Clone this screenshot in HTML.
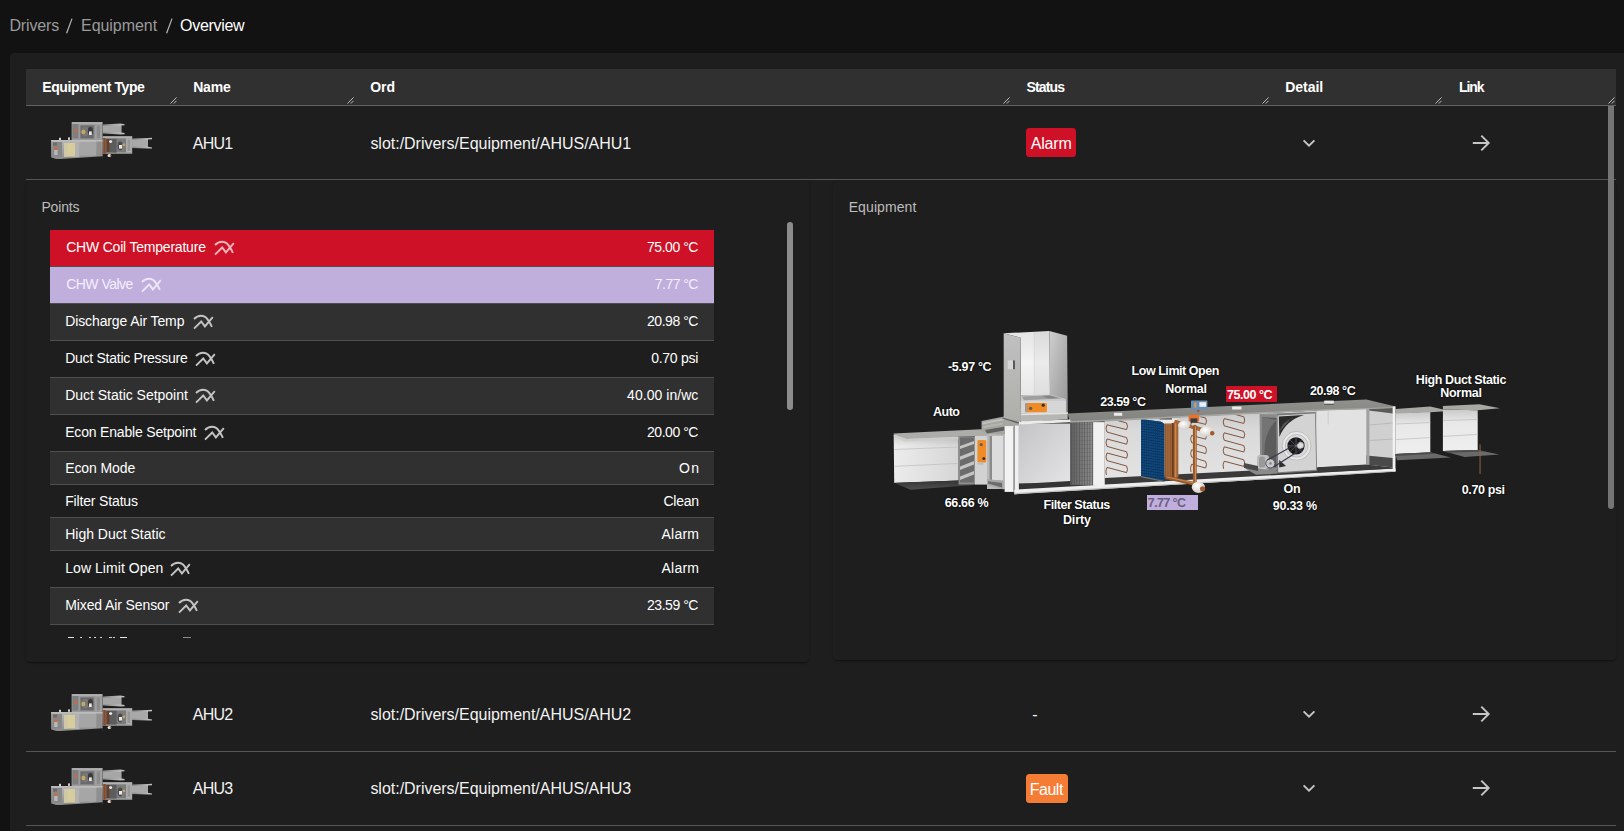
<!DOCTYPE html>
<html><head><meta charset="utf-8"><title>Equipment Overview</title>
<style>
html,body{margin:0;padding:0;background:#121212;overflow:hidden;}
body{width:1624px;height:831px;position:relative;font-family:"Liberation Sans", sans-serif;}
.b{position:absolute;display:block;}
.t{position:absolute;white-space:nowrap;font-family:"Liberation Sans", sans-serif;}
#clip{position:absolute;left:50px;top:625px;width:664px;height:13px;overflow:hidden;}
</style></head><body>
<div class="b" style="left:10px;top:53px;width:1700px;height:900px;background:#1e1e1e;border-radius:4px;"></div>
<div class="b" style="left:26px;top:69px;width:1590px;height:36px;background:#303030;"></div>
<div class="b" style="left:26px;top:105px;width:1590px;height:1px;background:#626262;"></div>
<div class="b" style="left:26px;top:179px;width:1590px;height:1px;background:#555555;"></div>
<div class="b" style="left:26px;top:751px;width:1590px;height:1px;background:#555555;"></div>
<div class="b" style="left:26px;top:825px;width:1590px;height:1px;background:#555555;"></div>
<div class="b" style="left:26px;top:181px;width:782.5px;height:480.5px;background:#1e1e1e;border-radius:4px;box-shadow:0 2px 1px -1px rgba(0,0,0,.2),0 1px 1px 0 rgba(0,0,0,.14),0 1px 3px 0 rgba(0,0,0,.12);"></div>
<div class="b" style="left:832.5px;top:181px;width:783px;height:479px;background:#1e1e1e;border-radius:4px;box-shadow:0 2px 1px -1px rgba(0,0,0,.2),0 1px 1px 0 rgba(0,0,0,.14),0 1px 3px 0 rgba(0,0,0,.12);"></div>
<div class="b" style="left:1608px;top:106px;width:6px;height:402.5px;background:#757575;border-radius:0 0 3px 3px;"></div>
<div class="b" style="left:787px;top:222px;width:6px;height:188px;background:#8c8c8c;border-radius:3px;"></div>
<div class="b" style="left:1026px;top:128px;width:50px;height:29px;background:#ce1126;border-radius:3.5px;"></div>
<div class="b" style="left:1026px;top:774px;width:42px;height:29.3px;background:#f57c34;border-radius:3.5px;"></div>
<div class="b" style="left:50px;top:230px;width:664px;height:37px;background:#ce1126;box-sizing:border-box;border-bottom:1px solid #4e4e4e;"></div>
<div class="b" style="left:50px;top:267px;width:664px;height:37px;background:#c0aedd;box-sizing:border-box;border-bottom:1px solid #4e4e4e;"></div>
<div class="b" style="left:50px;top:304px;width:664px;height:37px;background:#303030;box-sizing:border-box;border-bottom:1px solid #4e4e4e;"></div>
<div class="b" style="left:50px;top:341px;width:664px;height:37px;background:#1e1e1e;box-sizing:border-box;border-bottom:1px solid #4e4e4e;"></div>
<div class="b" style="left:50px;top:378px;width:664px;height:37px;background:#303030;box-sizing:border-box;border-bottom:1px solid #4e4e4e;"></div>
<div class="b" style="left:50px;top:415px;width:664px;height:37px;background:#1e1e1e;box-sizing:border-box;border-bottom:1px solid #4e4e4e;"></div>
<div class="b" style="left:50px;top:452px;width:664px;height:33px;background:#303030;box-sizing:border-box;border-bottom:1px solid #4e4e4e;"></div>
<div class="b" style="left:50px;top:485px;width:664px;height:33px;background:#1e1e1e;box-sizing:border-box;border-bottom:1px solid #4e4e4e;"></div>
<div class="b" style="left:50px;top:518px;width:664px;height:33px;background:#303030;box-sizing:border-box;border-bottom:1px solid #4e4e4e;"></div>
<div class="b" style="left:50px;top:551px;width:664px;height:37px;background:#1e1e1e;box-sizing:border-box;border-bottom:1px solid #4e4e4e;"></div>
<div class="b" style="left:50px;top:588px;width:664px;height:37px;background:#303030;box-sizing:border-box;border-bottom:1px solid #4e4e4e;"></div>
<div class="b" style="left:1147px;top:494.5px;width:50.5px;height:15px;background:#c0aedd;"></div>
<div class="b" style="left:1226.3px;top:386.2px;width:50.7px;height:15.4px;background:#ce1126;"></div>
<div id="clip"><div class="b" style="left:18.3px;top:12px;width:5.9px;height:1px;background:#e8e8e8"></div><div class="b" style="left:29.8px;top:12px;width:2.4px;height:1px;background:#d0d0d0"></div><div class="b" style="left:38.8px;top:12px;width:2.2px;height:1px;background:#d8d8d8"></div><div class="b" style="left:44.3px;top:12px;width:2.1px;height:1px;background:#d8d8d8"></div><div class="b" style="left:50.2px;top:12px;width:2.2px;height:1px;background:#d0d0d0"></div><div class="b" style="left:59.4px;top:12px;width:2.2px;height:1px;background:#d0d0d0"></div><div class="b" style="left:62.6px;top:12px;width:2.2px;height:1px;background:#d0d0d0"></div><div class="b" style="left:69.7px;top:12px;width:7.6px;height:1px;background:#e8e8e8"></div><div class="b" style="left:132.5px;top:12px;width:8.0px;height:1px;background:#8a8a8a"></div></div>
<div class="b" style="left:40px;top:110px;width:130px;height:65px"><svg width="130" height="65" viewBox="40 110 130 65" style="display:block;filter:blur(0.35px)">
<defs>
<linearGradient id="tg1" x1="0" y1="0" x2="0" y2="1"><stop offset="0" stop-color="#b8b8b8"/><stop offset="1" stop-color="#8e8e8e"/></linearGradient>
<linearGradient id="tg2" x1="0" y1="0" x2="1" y2="0"><stop offset="0" stop-color="#8a8a8a"/><stop offset="1" stop-color="#c4c4c4"/></linearGradient>
</defs>
<!-- upper right duct -->
<polygon points="102.8,124.6 120.5,123.4 124.6,124.2 124.6,125.2 121.4,125.6 121.4,132.4 124.6,133 124.6,134.2 120.5,134.4 102.8,133.6" fill="url(#tg2)"/>
<rect x="102.8" y="126" width="18.4" height="6.2" fill="#a6a6a6"/>
<!-- lower right duct -->
<polygon points="132,138.6 147.5,138 152,137.8 152,139.2 148,139.6 148,146.8 152,147.4 152,148.6 147.5,148.4 132,148" fill="url(#tg2)"/>
<rect x="132" y="140" width="16" height="6.6" fill="#a9a9a9"/>
<!-- upper box -->
<rect x="71.6" y="122" width="31" height="18.4" fill="#9b9b9b"/>
<rect x="72.2" y="122.6" width="30" height="1" fill="#bdbdbd"/>
<rect x="72.4" y="124" width="6" height="14.5" fill="#7f7f7f"/>
<rect x="80" y="125" width="14.6" height="14" fill="#8a8a8a"/>
<rect x="80.6" y="125.6" width="13" height="12.6" fill="#6a6a6a"/>
<ellipse cx="85.2" cy="131.5" rx="3.8" ry="5" fill="#777"/>
<ellipse cx="83.4" cy="132" rx="2" ry="2.2" fill="#c8a860"/>
<ellipse cx="90.4" cy="131" rx="2.6" ry="4" fill="#3a3a3a"/>
<rect x="89" y="131.4" width="2.8" height="3.6" fill="#e6e6e6"/>
<rect x="95.4" y="124.6" width="6.2" height="14.4" fill="#a5a5a5"/>
<rect x="96.6" y="125.4" width="3.6" height="13" fill="#8c8c8c"/>
<circle cx="75.8" cy="130.6" r="1.3" fill="#e8602a"/>
<!-- lower left box -->
<rect x="51.2" y="140" width="51.4" height="18.8" fill="url(#tg1)"/>
<rect x="51.2" y="140" width="51.4" height="1.4" fill="#bcbcbc"/>
<rect x="51.2" y="157" width="51.4" height="1.8" fill="#909090"/>
<rect x="52.4" y="142" width="9.6" height="14.6" fill="#878787"/>
<rect x="53" y="142.6" width="4" height="3" fill="#6c6c6c"/>
<rect x="54.2" y="150" width="3.4" height="5" fill="#b8b8b8"/>
<circle cx="55.6" cy="148.6" r="1.4" fill="#e8602a"/>
<rect x="64" y="143" width="11" height="13.6" fill="#d7cc9c"/>
<rect x="64" y="143" width="3.6" height="13.6" fill="#cfc8a4"/>
<rect x="75" y="142" width="4.4" height="15" fill="#b2b2b2"/>
<rect x="79.4" y="142" width="17" height="13.6" fill="#a6a6a6"/>
<rect x="96.4" y="141.6" width="5.4" height="15" fill="#8f8f8f"/>
<polygon points="57,159.3 102.8,156.3 102.8,159.6" fill="#1e1e1e"/><polygon points="50.8,157.2 57,159.3 50.8,159.3" fill="#1e1e1e"/>
<rect x="59" y="137.8" width="2" height="2.4" fill="#cfcfcf"/><rect x="68" y="137.4" width="2" height="2.4" fill="#cfcfcf"/>
<!-- lower right box -->
<rect x="102.8" y="136.4" width="29.4" height="17.4" fill="#9e9e9e"/>
<rect x="102.8" y="136.4" width="29.4" height="1.2" fill="#c0c0c0"/>
<rect x="103.2" y="138" width="2.6" height="15.6" fill="#8a4a28"/>
<rect x="105.8" y="138.6" width="11" height="14" fill="#5c5c5c"/>
<rect x="107" y="139" width="2.4" height="13" fill="#6a3c24"/>
<ellipse cx="110.6" cy="141.6" rx="1.6" ry="1.4" fill="#ececec"/>
<rect x="117" y="138.6" width="9" height="13.6" fill="#7c7c7c"/>
<ellipse cx="120.2" cy="146" rx="2.6" ry="4.4" fill="#4a4a4a"/>
<rect x="119" y="145" width="3.2" height="3.6" fill="#e8e8e8"/>
<ellipse cx="123.8" cy="144.8" rx="1.4" ry="1.4" fill="#c8a860"/>
<rect x="126.4" y="138.4" width="5.2" height="13.8" fill="#b4b4b4"/>
<rect x="127.4" y="139.4" width="3" height="11.6" fill="#979797"/>
<ellipse cx="109.4" cy="155.4" rx="1.8" ry="1.5" fill="#ececec"/><circle cx="110.4" cy="155.8" r="0.8" fill="#b0602a"/>
</svg>
</div><div class="b" style="left:40px;top:682px;width:130px;height:65px"><svg width="130" height="65" viewBox="40 110 130 65" style="display:block;filter:blur(0.35px)">
<defs>
<linearGradient id="tg1" x1="0" y1="0" x2="0" y2="1"><stop offset="0" stop-color="#b8b8b8"/><stop offset="1" stop-color="#8e8e8e"/></linearGradient>
<linearGradient id="tg2" x1="0" y1="0" x2="1" y2="0"><stop offset="0" stop-color="#8a8a8a"/><stop offset="1" stop-color="#c4c4c4"/></linearGradient>
</defs>
<!-- upper right duct -->
<polygon points="102.8,124.6 120.5,123.4 124.6,124.2 124.6,125.2 121.4,125.6 121.4,132.4 124.6,133 124.6,134.2 120.5,134.4 102.8,133.6" fill="url(#tg2)"/>
<rect x="102.8" y="126" width="18.4" height="6.2" fill="#a6a6a6"/>
<!-- lower right duct -->
<polygon points="132,138.6 147.5,138 152,137.8 152,139.2 148,139.6 148,146.8 152,147.4 152,148.6 147.5,148.4 132,148" fill="url(#tg2)"/>
<rect x="132" y="140" width="16" height="6.6" fill="#a9a9a9"/>
<!-- upper box -->
<rect x="71.6" y="122" width="31" height="18.4" fill="#9b9b9b"/>
<rect x="72.2" y="122.6" width="30" height="1" fill="#bdbdbd"/>
<rect x="72.4" y="124" width="6" height="14.5" fill="#7f7f7f"/>
<rect x="80" y="125" width="14.6" height="14" fill="#8a8a8a"/>
<rect x="80.6" y="125.6" width="13" height="12.6" fill="#6a6a6a"/>
<ellipse cx="85.2" cy="131.5" rx="3.8" ry="5" fill="#777"/>
<ellipse cx="83.4" cy="132" rx="2" ry="2.2" fill="#c8a860"/>
<ellipse cx="90.4" cy="131" rx="2.6" ry="4" fill="#3a3a3a"/>
<rect x="89" y="131.4" width="2.8" height="3.6" fill="#e6e6e6"/>
<rect x="95.4" y="124.6" width="6.2" height="14.4" fill="#a5a5a5"/>
<rect x="96.6" y="125.4" width="3.6" height="13" fill="#8c8c8c"/>
<circle cx="75.8" cy="130.6" r="1.3" fill="#e8602a"/>
<!-- lower left box -->
<rect x="51.2" y="140" width="51.4" height="18.8" fill="url(#tg1)"/>
<rect x="51.2" y="140" width="51.4" height="1.4" fill="#bcbcbc"/>
<rect x="51.2" y="157" width="51.4" height="1.8" fill="#909090"/>
<rect x="52.4" y="142" width="9.6" height="14.6" fill="#878787"/>
<rect x="53" y="142.6" width="4" height="3" fill="#6c6c6c"/>
<rect x="54.2" y="150" width="3.4" height="5" fill="#b8b8b8"/>
<circle cx="55.6" cy="148.6" r="1.4" fill="#e8602a"/>
<rect x="64" y="143" width="11" height="13.6" fill="#d7cc9c"/>
<rect x="64" y="143" width="3.6" height="13.6" fill="#cfc8a4"/>
<rect x="75" y="142" width="4.4" height="15" fill="#b2b2b2"/>
<rect x="79.4" y="142" width="17" height="13.6" fill="#a6a6a6"/>
<rect x="96.4" y="141.6" width="5.4" height="15" fill="#8f8f8f"/>
<polygon points="57,159.3 102.8,156.3 102.8,159.6" fill="#1e1e1e"/><polygon points="50.8,157.2 57,159.3 50.8,159.3" fill="#1e1e1e"/>
<rect x="59" y="137.8" width="2" height="2.4" fill="#cfcfcf"/><rect x="68" y="137.4" width="2" height="2.4" fill="#cfcfcf"/>
<!-- lower right box -->
<rect x="102.8" y="136.4" width="29.4" height="17.4" fill="#9e9e9e"/>
<rect x="102.8" y="136.4" width="29.4" height="1.2" fill="#c0c0c0"/>
<rect x="103.2" y="138" width="2.6" height="15.6" fill="#8a4a28"/>
<rect x="105.8" y="138.6" width="11" height="14" fill="#5c5c5c"/>
<rect x="107" y="139" width="2.4" height="13" fill="#6a3c24"/>
<ellipse cx="110.6" cy="141.6" rx="1.6" ry="1.4" fill="#ececec"/>
<rect x="117" y="138.6" width="9" height="13.6" fill="#7c7c7c"/>
<ellipse cx="120.2" cy="146" rx="2.6" ry="4.4" fill="#4a4a4a"/>
<rect x="119" y="145" width="3.2" height="3.6" fill="#e8e8e8"/>
<ellipse cx="123.8" cy="144.8" rx="1.4" ry="1.4" fill="#c8a860"/>
<rect x="126.4" y="138.4" width="5.2" height="13.8" fill="#b4b4b4"/>
<rect x="127.4" y="139.4" width="3" height="11.6" fill="#979797"/>
<ellipse cx="109.4" cy="155.4" rx="1.8" ry="1.5" fill="#ececec"/><circle cx="110.4" cy="155.8" r="0.8" fill="#b0602a"/>
</svg>
</div><div class="b" style="left:40px;top:756px;width:130px;height:65px"><svg width="130" height="65" viewBox="40 110 130 65" style="display:block;filter:blur(0.35px)">
<defs>
<linearGradient id="tg1" x1="0" y1="0" x2="0" y2="1"><stop offset="0" stop-color="#b8b8b8"/><stop offset="1" stop-color="#8e8e8e"/></linearGradient>
<linearGradient id="tg2" x1="0" y1="0" x2="1" y2="0"><stop offset="0" stop-color="#8a8a8a"/><stop offset="1" stop-color="#c4c4c4"/></linearGradient>
</defs>
<!-- upper right duct -->
<polygon points="102.8,124.6 120.5,123.4 124.6,124.2 124.6,125.2 121.4,125.6 121.4,132.4 124.6,133 124.6,134.2 120.5,134.4 102.8,133.6" fill="url(#tg2)"/>
<rect x="102.8" y="126" width="18.4" height="6.2" fill="#a6a6a6"/>
<!-- lower right duct -->
<polygon points="132,138.6 147.5,138 152,137.8 152,139.2 148,139.6 148,146.8 152,147.4 152,148.6 147.5,148.4 132,148" fill="url(#tg2)"/>
<rect x="132" y="140" width="16" height="6.6" fill="#a9a9a9"/>
<!-- upper box -->
<rect x="71.6" y="122" width="31" height="18.4" fill="#9b9b9b"/>
<rect x="72.2" y="122.6" width="30" height="1" fill="#bdbdbd"/>
<rect x="72.4" y="124" width="6" height="14.5" fill="#7f7f7f"/>
<rect x="80" y="125" width="14.6" height="14" fill="#8a8a8a"/>
<rect x="80.6" y="125.6" width="13" height="12.6" fill="#6a6a6a"/>
<ellipse cx="85.2" cy="131.5" rx="3.8" ry="5" fill="#777"/>
<ellipse cx="83.4" cy="132" rx="2" ry="2.2" fill="#c8a860"/>
<ellipse cx="90.4" cy="131" rx="2.6" ry="4" fill="#3a3a3a"/>
<rect x="89" y="131.4" width="2.8" height="3.6" fill="#e6e6e6"/>
<rect x="95.4" y="124.6" width="6.2" height="14.4" fill="#a5a5a5"/>
<rect x="96.6" y="125.4" width="3.6" height="13" fill="#8c8c8c"/>
<circle cx="75.8" cy="130.6" r="1.3" fill="#e8602a"/>
<!-- lower left box -->
<rect x="51.2" y="140" width="51.4" height="18.8" fill="url(#tg1)"/>
<rect x="51.2" y="140" width="51.4" height="1.4" fill="#bcbcbc"/>
<rect x="51.2" y="157" width="51.4" height="1.8" fill="#909090"/>
<rect x="52.4" y="142" width="9.6" height="14.6" fill="#878787"/>
<rect x="53" y="142.6" width="4" height="3" fill="#6c6c6c"/>
<rect x="54.2" y="150" width="3.4" height="5" fill="#b8b8b8"/>
<circle cx="55.6" cy="148.6" r="1.4" fill="#e8602a"/>
<rect x="64" y="143" width="11" height="13.6" fill="#d7cc9c"/>
<rect x="64" y="143" width="3.6" height="13.6" fill="#cfc8a4"/>
<rect x="75" y="142" width="4.4" height="15" fill="#b2b2b2"/>
<rect x="79.4" y="142" width="17" height="13.6" fill="#a6a6a6"/>
<rect x="96.4" y="141.6" width="5.4" height="15" fill="#8f8f8f"/>
<polygon points="57,159.3 102.8,156.3 102.8,159.6" fill="#1e1e1e"/><polygon points="50.8,157.2 57,159.3 50.8,159.3" fill="#1e1e1e"/>
<rect x="59" y="137.8" width="2" height="2.4" fill="#cfcfcf"/><rect x="68" y="137.4" width="2" height="2.4" fill="#cfcfcf"/>
<!-- lower right box -->
<rect x="102.8" y="136.4" width="29.4" height="17.4" fill="#9e9e9e"/>
<rect x="102.8" y="136.4" width="29.4" height="1.2" fill="#c0c0c0"/>
<rect x="103.2" y="138" width="2.6" height="15.6" fill="#8a4a28"/>
<rect x="105.8" y="138.6" width="11" height="14" fill="#5c5c5c"/>
<rect x="107" y="139" width="2.4" height="13" fill="#6a3c24"/>
<ellipse cx="110.6" cy="141.6" rx="1.6" ry="1.4" fill="#ececec"/>
<rect x="117" y="138.6" width="9" height="13.6" fill="#7c7c7c"/>
<ellipse cx="120.2" cy="146" rx="2.6" ry="4.4" fill="#4a4a4a"/>
<rect x="119" y="145" width="3.2" height="3.6" fill="#e8e8e8"/>
<ellipse cx="123.8" cy="144.8" rx="1.4" ry="1.4" fill="#c8a860"/>
<rect x="126.4" y="138.4" width="5.2" height="13.8" fill="#b4b4b4"/>
<rect x="127.4" y="139.4" width="3" height="11.6" fill="#979797"/>
<ellipse cx="109.4" cy="155.4" rx="1.8" ry="1.5" fill="#ececec"/><circle cx="110.4" cy="155.8" r="0.8" fill="#b0602a"/>
</svg>
</div>
<svg class="b" style="left:880px;top:320px" width="660" height="220" viewBox="880 320 660 220">
<defs>
<linearGradient id="gWall" x1="0" y1="0" x2="1" y2="0"><stop offset="0" stop-color="#ececec"/><stop offset="1" stop-color="#d6d6d6"/></linearGradient>
<linearGradient id="gWallV" x1="0" y1="0" x2="0" y2="1"><stop offset="0" stop-color="#c6c6c6"/><stop offset="0.3" stop-color="#dadada"/><stop offset="1" stop-color="#e4e4e4"/></linearGradient>
<linearGradient id="gTop" x1="0" y1="0" x2="0" y2="1"><stop offset="0" stop-color="#90908c"/><stop offset="1" stop-color="#82827e"/></linearGradient>
<linearGradient id="gFloor" x1="0" y1="0" x2="0" y2="1"><stop offset="0" stop-color="#333333"/><stop offset="1" stop-color="#505050"/></linearGradient>
<linearGradient id="gMix" x1="0" y1="0" x2="1" y2="1"><stop offset="0" stop-color="#c4c4c6"/><stop offset="1" stop-color="#e4e4e6"/></linearGradient>
<linearGradient id="gOAleft" x1="0" y1="0" x2="0" y2="1"><stop offset="0" stop-color="#c0c0c0"/><stop offset="1" stop-color="#aeaeaa"/></linearGradient>
<linearGradient id="gOAright" x1="0" y1="0" x2="1" y2="0"><stop offset="0" stop-color="#cfcfcf"/><stop offset="1" stop-color="#b2b2b2"/></linearGradient><linearGradient id="gShade" x1="0" y1="0" x2="0" y2="1"><stop offset="0" stop-color="#000" stop-opacity="0"/><stop offset="1" stop-color="#000" stop-opacity="0.16"/></linearGradient><linearGradient id="gOAback" x1="0" y1="0" x2="0" y2="1"><stop offset="0" stop-color="#e4e4e4"/><stop offset="0.5" stop-color="#f4f4f4"/><stop offset="1" stop-color="#e6e6e6"/></linearGradient>
<linearGradient id="gFilter" x1="0" y1="0" x2="1" y2="0"><stop offset="0" stop-color="#5e5e5e"/><stop offset="0.5" stop-color="#7a7a7a"/><stop offset="1" stop-color="#8e8e8e"/></linearGradient>
<linearGradient id="gCop" x1="0" y1="0" x2="1" y2="0"><stop offset="0" stop-color="#8c5228"/><stop offset="0.5" stop-color="#d08a50"/><stop offset="1" stop-color="#8c5228"/></linearGradient>
<pattern id="pBlue" width="2.2" height="2.6" patternUnits="userSpaceOnUse" patternTransform="skewY(8)"><rect width="2.2" height="2.6" fill="#0f4a80"/><rect width="2.2" height="0.8" fill="#0a3058"/><rect width="0.6" height="2.6" fill="#0b3864"/></pattern>
<pattern id="pFil" width="2.6" height="4" patternUnits="userSpaceOnUse"><rect width="2.6" height="4" fill="none"/><rect width="0.8" height="4" fill="#4e4e4e" opacity=".7"/><rect y="0" width="2.6" height="0.6" fill="#5a5a5a" opacity=".5"/></pattern>
<radialGradient id="gCyl" cx=".4" cy=".35" r=".7"><stop offset="0" stop-color="#ffffff"/><stop offset="1" stop-color="#cfcac4"/></radialGradient>
<linearGradient id="gDuct" x1="0" y1="0" x2="0" y2="1"><stop offset="0" stop-color="#c9c9c9"/><stop offset="0.3" stop-color="#e8e8e8"/><stop offset="1" stop-color="#efefef"/></linearGradient><linearGradient id="gShadeTop" x1="0" y1="0" x2="0" y2="1"><stop offset="0" stop-color="#000" stop-opacity="0.14"/><stop offset="1" stop-color="#000" stop-opacity="0"/></linearGradient></defs>

<!-- ===== Return duct (left) ===== -->
<polygon points="893.7,435 958.6,436.5 958.6,480.6 894.2,482.9" fill="url(#gWall)"/><polygon points="893.7,435 958.6,436.5 958.6,446 893.7,446" fill="url(#gShadeTop)"/>
<polygon points="893.7,433.6 981.1,429.2 988.3,431.9 988.3,436 958.6,436.8 906.5,439 893.7,434.6" fill="#acaca8"/>
<polygon points="893.7,434.6 906.5,439 958.6,436.8 958.6,439.2 905,441.6 894,436.5" fill="#cdcdcb"/>
<path d="M894.5 449.5 L958.6 447 M894.5 466.3 L958.6 463.4" stroke="#bdbdbd" stroke-width="0.7" fill="none"/>
<polygon points="894.2,482.7 958.6,480.4 974,485 910.6,489.8" fill="url(#gFloor)"/>
<!-- damper -->
<rect x="958.6" y="436.5" width="16.6" height="48" fill="#8e8e8e"/>
<rect x="960" y="437.5" width="14" height="45" fill="#6c6c6c"/>
<polygon points="960,446 974,441 974,444 960,449" fill="#c4c4c4"/>
<polygon points="960,456.5 974,451 974,454.5 960,460" fill="#c4c4c4"/>
<polygon points="960,466.5 974,461 974,464.5 960,470" fill="#c4c4c4"/>
<polygon points="960,476.5 974,471 974,474.5 960,480" fill="#c4c4c4"/>
<rect x="975" y="436" width="12.3" height="48.6" fill="#d2d2d2"/>
<rect x="977.4" y="440" width="8.8" height="22.6" rx="1.3" fill="#f08c28"/>
<circle cx="981.2" cy="444.6" r="1.6" fill="#6b5a4a"/><circle cx="983.8" cy="458.4" r="1.5" fill="#3c2c22"/>
<rect x="977.4" y="462.6" width="6" height="2" fill="#bbbbbb"/>

<!-- ===== Mixing box side ===== -->
<rect x="987" y="434" width="17.8" height="55" fill="#b9b9b9"/>
<rect x="989.6" y="436" width="2.4" height="50" fill="#8a8a8a"/>
<rect x="992" y="436" width="11" height="44" fill="#dcdcdc"/>
<polygon points="987,479 1003.6,481 1003.6,489.5 987,485" fill="#a8a8a8"/>
<polygon points="988,481.3 1002,483 1002,487.5 988,483.5" fill="#6b6b6b"/>
<!-- louver on top of mixing box side -->
<polygon points="981.5,421 1004,416.4 1020,417.6 1020,422 1004.6,426.7 1004.6,434.5 987,434 981.5,431" fill="#a4a4a0"/>
<polygon points="1003.6,417.6 1021.2,423.2 1021.2,427 1004.4,427" fill="#a6a6a2"/><polygon points="982.3,422.5 1004,418.3 1004,420.2 982.3,424.6" fill="#c0c0bc"/>
<polygon points="983,426 1003,422.4 1003,424.4 983,428.2" fill="#b4b4b0"/>
<polygon points="985,430 1004,426.8 1004,430.6 987,433.6" fill="#5e5e5c"/>
<!-- columns -->
<rect x="1004.6" y="426.1" width="9.1" height="65.8" fill="#f3f3f3"/>
<rect x="1013.7" y="426.1" width="1.3" height="66.5" fill="#9a9a9a"/>
<rect x="1015" y="425.6" width="3.9" height="68" fill="#f0f0f0"/>
<!-- back wall of mixing box -->
<rect x="1018.9" y="423.5" width="51.6" height="60" fill="url(#gMix)"/>
<polygon points="1018.9,483.9 1070.3,481 1093.1,485 1093.1,485.9 1019.4,489.8" fill="#343434"/>

<!-- ===== Main casing back wall ===== -->
<polygon points="1104.6,420.6 1394,406.8 1394,468 1104.6,485" fill="url(#gWallV)"/>
<!-- floor main -->
<polygon points="1104.6,477.9 1394,463.5 1394,469 1104.6,485" fill="#3a3a3a"/>
<!-- bottom frame -->
<polygon points="1014.3,489.7 1395.5,468.5 1395.5,471.6 1014.3,494.2" fill="#eeeeee"/>
<polygon points="1014.3,493.2 1395.5,470.8 1395.5,471.8 1014.3,494.4" fill="#bdbdbd"/>
<!-- filter -->
<rect x="1070.3" y="422.1" width="22.9" height="63" fill="url(#gFilter)"/>
<rect x="1070.3" y="422.1" width="22.9" height="63" fill="url(#pFil)"/>
<!-- post -->
<rect x="1093.1" y="422.1" width="11.6" height="63.4" fill="#f1f1f1"/>

<!-- serpentines -->
<g fill="none" stroke="#7c4e34" stroke-width="0.95">
<path d="M1118 420.6 L1126.6 423 Q1128.4 426.2 1126.6 429.6 L1107 424.8 Q1105 428 1107 432 L1126.6 437.6 Q1128.4 441 1126.6 444.2 L1107 439 Q1105 442.4 1107 446.4 L1126.6 451.8 Q1128.4 455 1126.6 458.2 L1107 453 Q1105 456.6 1107 460.6 L1126.6 466 Q1128.4 469.4 1126.6 472.6 L1107 467.4 Q1105 471 1106.4 475"/>
<path transform="translate(117.2,-6.2)" d="M1118 420.6 L1126.6 423 Q1128.4 426.2 1126.6 429.6 L1107 424.8 Q1105 428 1107 432 L1126.6 437.6 Q1128.4 441 1126.6 444.2 L1107 439 Q1105 442.4 1107 446.4 L1126.6 451.8 Q1128.4 455 1126.6 458.2 L1107 453 Q1105 456.6 1107 460.6 L1126.6 466 Q1128.4 469.4 1126.6 472.6 L1107 467.4 Q1105 471 1106.4 475"/>
<path d="M1200 416.6 L1205.6 418 Q1207.4 421 1205.6 424.4 L1192 421 Q1190 424.6 1191.6 428 L1205.6 432.6 Q1207.4 436 1205.6 439.2 L1191.6 435.4 Q1189.8 438.8 1191.6 442.6 L1205.6 447 Q1207.4 450.4 1205.6 453.6 L1191.6 449.8 Q1189.8 453.4 1191.6 457 L1205.6 461.4 Q1207.4 464.8 1205.6 468 L1191.6 464.2 Q1189.8 468 1191 472"/>
</g>

<!-- blue coil -->
<polygon points="1141.1,419 1164.5,422.2 1164.5,480.9 1141.1,475.9" fill="#0f4a80"/>
<polygon points="1141.1,419 1164.5,422.2 1164.5,480.9 1141.1,475.9" fill="url(#pBlue)"/>
<polygon points="1141.1,475.9 1164.5,480.9 1164.5,482 1141.1,477.2" fill="#777"/>
<!-- coil top white -->
<polygon points="1158,418.8 1177.1,418.8 1177.1,424 1164.5,424" fill="#ededed"/>
<polygon points="1158,418.2 1172,418.2 1172,419.6 1160,419.6" fill="#3a3a3a"/>
<!-- copper coil end -->
<rect x="1164.5" y="423.4" width="13.9" height="54" fill="#b07040"/>
<g stroke="#7a4826" stroke-width="0.6"><path d="M1165.5 424.5 V477 M1167.2 424.5 V477 M1168.9 424.5 V477 M1170.6 424.5 V477"/></g>
<rect x="1171.8" y="423" width="2" height="54.6" fill="#6a3c1c"/>
<rect x="1173.8" y="422" width="3.6" height="55.6" fill="url(#gCop)"/>
<!-- ===== fan ===== -->
<polygon points="1259.6,414 1276.7,414.6 1276.7,473.4 1260.2,465.8" fill="#8a8a8a"/>
<polygon points="1262,417 1276.7,418 1276.7,468 1262,462" fill="#5c5c5c"/><path d="M1276.7 420 Q1264 432 1264.5 452 L1262 462 L1262 417 Z" fill="#747474"/>
<polygon points="1259.6,414 1315.8,412.1 1317.1,470.9 1276.7,473.4 1276.7,414.6" fill="#7a7a7a"/>
<polygon points="1277.6,415.6 1315,413.4 1316.2,469.8 1278.2,472.2" fill="#d3d3d3"/>
<path d="M1278.8 416.4 L1304 415 Q1286 420 1279.4 437 Z" fill="#2a2a2a"/>
<polygon points="1279.2,460 1286,466 1279.2,467.6" fill="#2e2e2e"/>
<path d="M1279.2 432 Q1283 420 1294 418.6 L1291 418.6 L1279.2 432 Z" fill="#555"/>
<circle cx="1296.6" cy="445.8" r="14.4" fill="#e8e8e8" stroke="#b4b4b4" stroke-width="0.8"/>
<circle cx="1296.6" cy="445.8" r="11.4" fill="#d9d9d9" stroke="#a8a8a8" stroke-width="0.6"/>
<circle cx="1296" cy="445.8" r="8.6" fill="#1a1a1a"/><path d="M1296 437.2 V454.4 M1287.4 445.8 H1304.6 M1290 439.8 L1302 451.8 M1302 439.8 L1290 451.8" stroke="#8a8a8a" stroke-width="0.5"/>
<circle cx="1300.4" cy="445.4" r="3.3" fill="#dcdcdc" stroke="#8a8a8a" stroke-width="0.5"/>
<!-- motor -->
<rect x="1257" y="455" width="12" height="13.6" rx="3" fill="#bdbdbd"/>
<rect x="1259" y="456.4" width="6" height="11" rx="2" fill="#9a9a9a"/>
<circle cx="1270.4" cy="463.4" r="4.6" fill="#c9c9c9" stroke="#4a4a5a" stroke-width="1"/>
<circle cx="1270.4" cy="463.4" r="1.3" fill="#888"/>
<path d="M1267.4 460 L1299 442.6 M1273.6 467 L1303 448.2" stroke="#34364c" stroke-width="1.1" fill="none"/>
<polygon points="1246,466.6 1277,471 1277,473.6 1256,474.8 1246,469" fill="#8a8a8a"/>
<polygon points="1244,463 1258,466 1258,471 1244,468" fill="#4a4a4a"/>

<!-- back wall right chamber -->
<polygon points="1317.1,410.2 1366.4,408.6 1366.4,464.6 1317.1,467.2" fill="#e2e2e2"/>
<path d="M1328.2 411.5 V424.5" stroke="#b5b5b5" stroke-width="0.5"/>
<polygon points="1317.6,467.2 1366.4,464.4 1392.9,467.4 1392.9,468.6 1318,472.6" fill="#3a3a3a"/>
<!-- right inner side -->
<polygon points="1366.4,408.6 1392.9,411.5 1392.9,467.4 1366.4,464.4" fill="#d0d0d0"/>
<polygon points="1366.4,408.6 1392.9,407.2 1392.9,413.6 1368.6,410.6" fill="#5a5a58"/>
<polygon points="1366.4,455.6 1392.9,458 1392.9,467.4 1366.4,464.4" fill="#4a4a4a"/>
<rect x="1366.4" y="408.6" width="3" height="56" fill="#a2a2a2"/>
<path d="M1369.4 425 L1392.9 423 M1369.4 440.4 L1392.9 439.2" stroke="#b0b0b0" stroke-width="0.7"/>

<!-- ===== top face of main casing ===== -->
<polygon points="1067.7,413.6 1366.4,399.4 1395.5,406.4 1394.8,407.8 1366.4,409 1315.8,410.4 1104.6,421 1070,422.2" fill="url(#gTop)"/>
<polygon points="1070,421 1104.6,419.8 1315.8,409.4 1366.4,408 1394.8,407 1394.8,408 1366.4,409.2 1315.8,410.8 1104.6,421.4 1070,422.4" fill="#a6a6a2"/>
<!-- sensor tabs -->
<rect x="1114" y="412.8" width="8.2" height="3" fill="#e9e9e9"/>
<rect x="1232.1" y="406.5" width="9.4" height="3" fill="#e9e9e9"/>
<rect x="1324.2" y="400.6" width="9.6" height="3.2" fill="#e9e9e9"/>
<rect x="1324.2" y="403.8" width="9.6" height="1.2" fill="#5a5a5a"/>
<!-- right white frame -->
<rect x="1392.7" y="406.4" width="2.8" height="64.8" fill="#f2f2f2"/>

<!-- pipes -->
<g fill="none" stroke-linecap="round">
<path d="M1176 421.6 L1194.8 428" stroke="#a86636" stroke-width="3.4"/>
<path d="M1194.8 427 L1210 432" stroke="#a86636" stroke-width="3"/>
<path d="M1194.8 426.6 V483" stroke="#98582a" stroke-width="3.8"/>
<path d="M1195.4 426.6 V483" stroke="#cc8a52" stroke-width="1.2"/>
<path d="M1167 477.6 L1194.8 484 L1198.6 487.3" stroke="#98582a" stroke-width="3.6"/>
<path d="M1167 477 L1194.8 483.2" stroke="#cc8a52" stroke-width="1"/>
</g>
<!-- white cylinders -->
<ellipse cx="1184" cy="425.3" rx="5.8" ry="4.6" fill="url(#gCyl)"/>
<ellipse cx="1206.4" cy="431.6" rx="6.8" ry="5" fill="url(#gCyl)"/>
<circle cx="1212.2" cy="433.3" r="2.2" fill="#a05a30"/>
<ellipse cx="1198.4" cy="487.3" rx="6.6" ry="5.6" fill="url(#gCyl)"/>
<circle cx="1202.6" cy="488.8" r="2.6" fill="#a05a30"/>
<!-- valve actuator -->
<rect x="1188.6" y="414.8" width="10.6" height="6.6" rx="1.2" fill="#e8722a"/>
<rect x="1190.4" y="418.4" width="7" height="4.4" fill="#3a3a3a"/>
<!-- sensor box on top -->
<rect x="1191" y="400.4" width="16.4" height="9.6" rx="0.8" fill="#6d8db0"/>
<rect x="1199.4" y="402.2" width="6.8" height="4.6" fill="#e8eef4"/>
<rect x="1194.2" y="402.6" width="2.2" height="5" fill="#c8a060"/>
<rect x="1197" y="410" width="2.4" height="1.8" fill="#8a5a3a"/>

<!-- ===== Outside-air duct (top) ===== -->
<polygon points="1003.7,333.2 1049.4,331.1 1050,395.7 1021,395.7 1020.4,337.6" fill="url(#gOAback)"/>
<polygon points="1034.3,332 1049.4,331.1 1050,395.7 1034.3,395.7" fill="#000" opacity="0.035"/>
<path d="M1034.3 332 V395.7" stroke="#cfcfcf" stroke-width="0.6"/>
<polygon points="1049.4,331.1 1067.1,335.7 1067.7,413.4 1050,413.4" fill="url(#gOAright)"/><polygon points="1049.4,331.1 1067.1,335.7 1067.7,413.4 1050,413.4" fill="url(#gShade)"/>
<polygon points="1003.7,333.2 1020.4,337.6 1021,421 1003.7,417.8" fill="url(#gOAleft)"/>
<!-- damper tray -->
<polygon points="1021,395.7 1050,394.5 1065.8,398.9 1065.8,413.4 1021,413.4" fill="#c9c9c9"/>
<polygon points="1022,396.4 1050,395.3 1062,398.6 1024,400.2" fill="#9e9e9e"/>
<polygon points="1042,396 1050,395.6 1058,398 1048,398.6" fill="#858585"/>
<rect x="1021" y="400.8" width="44.8" height="12.6" fill="#d6d6d6"/>
<rect x="1025.2" y="403" width="21.7" height="9.2" rx="1.2" fill="#f08c28"/>
<rect x="1025.2" y="403" width="2" height="9.2" fill="#9a9a9a"/>
<circle cx="1043.2" cy="405.2" r="1.6" fill="#3c2c22"/><circle cx="1030.6" cy="408.4" r="1.7" fill="#6b5a4a"/>
<!-- base -->
<polygon points="1021,413.4 1067.7,412.2 1067.7,419.2 1021,422.2" fill="#b6b6b4"/>
<polygon points="1021,413.4 1067.7,412.2 1067.7,414 1021,415.2" fill="#e2e2e2"/>
<polygon points="1002.2,417.4 1021,423 1021,424.4 1002.2,418.6" fill="#5c5c5a"/>
<!-- mixing box top frame -->
<polygon points="1018.9,421.6 1070.3,419.4 1070.3,422.2 1018.9,424.5" fill="#ececec"/>
<!-- sensor on left face -->
<rect x="1007.7" y="360.4" width="5.4" height="8.8" fill="#d6d6d6"/>
<rect x="1013.1" y="360.4" width="1.8" height="8.8" fill="#4e4e4e"/>

<!-- ===== supply ducts ===== -->
<polygon points="1395.4,412.9 1430.3,411.8 1430.3,452.6 1395.4,454" fill="url(#gDuct)"/>
<path d="M1395.4 424 L1430.3 422.6 M1395.4 439.6 L1430.3 437.6" stroke="#c2c2c2" stroke-width="0.8"/>
<polygon points="1395.4,408.9 1430.3,406.6 1449.7,411.1 1430.3,412.3 1395.4,413.4" fill="#a8a8a4"/>
<polygon points="1395.4,454 1430.3,452.3 1450.9,457.4 1397.1,460.3" fill="#6a6a68"/>
<polygon points="1395.4,454 1430.3,452.3 1436,453.8 1395.4,456" fill="#4c4c4c"/>

<polygon points="1442.9,409.4 1477.7,410.3 1477.7,450 1442.9,451.1" fill="url(#gDuct)"/>
<path d="M1442.9 420.6 L1477.7 419.4 M1442.9 436.4 L1477.7 434.4" stroke="#c2c2c2" stroke-width="0.8"/>
<polygon points="1442.9,406 1479.4,404.3 1500,408.3 1477.7,410.3 1442.9,409.4" fill="#a8a8a4"/>
<polygon points="1442.9,451.1 1477.7,450 1499.4,454.6 1464.6,456.9" fill="#6a6a68"/>
<polygon points="1442.9,451.1 1477.7,450 1484,451.4 1448,452.8" fill="#4c4c4c"/>
<rect x="1479.6" y="444.3" width="0.9" height="29.7" fill="#9a6a48"/>
</svg>

<svg class="b" style="left:213.70000000000002px;top:239.9px" width="22" height="16" viewBox="0 0 22 16"><g fill="none" stroke="#f2b6bd" stroke-width="1.9" stroke-linecap="butt" stroke-linejoin="miter"><path d="M1.0 5.0 C5.0 0.9 11.0 0.4 14.6 5.4 C16.4 8 17.9 10.6 18.9 12.9"/><path d="M1.0 14.6 L8.2 7.5 L11.9 12.4 L19.8 3.1"/></g></svg>
<svg class="b" style="left:140.8px;top:276.9px" width="22" height="16" viewBox="0 0 22 16"><g fill="none" stroke="#ece6f6" stroke-width="1.9" stroke-linecap="butt" stroke-linejoin="miter"><path d="M1.0 5.0 C5.0 0.9 11.0 0.4 14.6 5.4 C16.4 8 17.9 10.6 18.9 12.9"/><path d="M1.0 14.6 L8.2 7.5 L11.9 12.4 L19.8 3.1"/></g></svg>
<svg class="b" style="left:193.0px;top:313.9px" width="22" height="16" viewBox="0 0 22 16"><g fill="none" stroke="#c4c4c4" stroke-width="1.9" stroke-linecap="butt" stroke-linejoin="miter"><path d="M1.0 5.0 C5.0 0.9 11.0 0.4 14.6 5.4 C16.4 8 17.9 10.6 18.9 12.9"/><path d="M1.0 14.6 L8.2 7.5 L11.9 12.4 L19.8 3.1"/></g></svg>
<svg class="b" style="left:195.3px;top:350.9px" width="22" height="16" viewBox="0 0 22 16"><g fill="none" stroke="#c4c4c4" stroke-width="1.9" stroke-linecap="butt" stroke-linejoin="miter"><path d="M1.0 5.0 C5.0 0.9 11.0 0.4 14.6 5.4 C16.4 8 17.9 10.6 18.9 12.9"/><path d="M1.0 14.6 L8.2 7.5 L11.9 12.4 L19.8 3.1"/></g></svg>
<svg class="b" style="left:195.3px;top:387.9px" width="22" height="16" viewBox="0 0 22 16"><g fill="none" stroke="#c4c4c4" stroke-width="1.9" stroke-linecap="butt" stroke-linejoin="miter"><path d="M1.0 5.0 C5.0 0.9 11.0 0.4 14.6 5.4 C16.4 8 17.9 10.6 18.9 12.9"/><path d="M1.0 14.6 L8.2 7.5 L11.9 12.4 L19.8 3.1"/></g></svg>
<svg class="b" style="left:203.8px;top:424.9px" width="22" height="16" viewBox="0 0 22 16"><g fill="none" stroke="#c4c4c4" stroke-width="1.9" stroke-linecap="butt" stroke-linejoin="miter"><path d="M1.0 5.0 C5.0 0.9 11.0 0.4 14.6 5.4 C16.4 8 17.9 10.6 18.9 12.9"/><path d="M1.0 14.6 L8.2 7.5 L11.9 12.4 L19.8 3.1"/></g></svg>
<svg class="b" style="left:169.8px;top:560.9px" width="22" height="16" viewBox="0 0 22 16"><g fill="none" stroke="#c4c4c4" stroke-width="1.9" stroke-linecap="butt" stroke-linejoin="miter"><path d="M1.0 5.0 C5.0 0.9 11.0 0.4 14.6 5.4 C16.4 8 17.9 10.6 18.9 12.9"/><path d="M1.0 14.6 L8.2 7.5 L11.9 12.4 L19.8 3.1"/></g></svg>
<svg class="b" style="left:177.8px;top:597.9px" width="22" height="16" viewBox="0 0 22 16"><g fill="none" stroke="#c4c4c4" stroke-width="1.9" stroke-linecap="butt" stroke-linejoin="miter"><path d="M1.0 5.0 C5.0 0.9 11.0 0.4 14.6 5.4 C16.4 8 17.9 10.6 18.9 12.9"/><path d="M1.0 14.6 L8.2 7.5 L11.9 12.4 L19.8 3.1"/></g></svg>
<svg class="b" style="left:1301.3px;top:135.3px" width="16" height="16" viewBox="0 0 16 16"><path d="M2.6 5.3 L8 10.7 L13.4 5.3" fill="none" stroke="#c6c6c6" stroke-width="1.9"/></svg>
<svg class="b" style="left:1471.3px;top:133.3px" width="20" height="20" viewBox="0 0 20 20"><path d="M1.8 10 H17 M10.3 2.6 L17.7 10 L10.3 17.4" fill="none" stroke="#c6c6c6" stroke-width="1.9"/></svg>
<svg class="b" style="left:1301.3px;top:706.3px" width="16" height="16" viewBox="0 0 16 16"><path d="M2.6 5.3 L8 10.7 L13.4 5.3" fill="none" stroke="#c6c6c6" stroke-width="1.9"/></svg>
<svg class="b" style="left:1471.3px;top:704.3px" width="20" height="20" viewBox="0 0 20 20"><path d="M1.8 10 H17 M10.3 2.6 L17.7 10 L10.3 17.4" fill="none" stroke="#c6c6c6" stroke-width="1.9"/></svg>
<svg class="b" style="left:1301.3px;top:780.3px" width="16" height="16" viewBox="0 0 16 16"><path d="M2.6 5.3 L8 10.7 L13.4 5.3" fill="none" stroke="#c6c6c6" stroke-width="1.9"/></svg>
<svg class="b" style="left:1471.3px;top:778.3px" width="20" height="20" viewBox="0 0 20 20"><path d="M1.8 10 H17 M10.3 2.6 L17.7 10 L10.3 17.4" fill="none" stroke="#c6c6c6" stroke-width="1.9"/></svg>
<svg class="b" style="left:65.4px;top:17px" width="9" height="18" viewBox="0 0 9 18"><path d="M1.6 16.2 L7.0 1.6" stroke="#b4b4b4" stroke-width="1.25" fill="none"/></svg>
<svg class="b" style="left:164.7px;top:17px" width="9" height="18" viewBox="0 0 9 18"><path d="M1.6 16.2 L7.0 1.6" stroke="#b4b4b4" stroke-width="1.25" fill="none"/></svg>
<svg class="b" style="left:169.5px;top:97px" width="7" height="7" viewBox="0 0 7 7"><path d="M0.5 6.5 L6.5 0.5 M3.8 6.5 L6.5 3.8" stroke="#bdbdbd" stroke-width="1" fill="none"/></svg>
<svg class="b" style="left:346.5px;top:97px" width="7" height="7" viewBox="0 0 7 7"><path d="M0.5 6.5 L6.5 0.5 M3.8 6.5 L6.5 3.8" stroke="#bdbdbd" stroke-width="1" fill="none"/></svg>
<svg class="b" style="left:1002.5px;top:97px" width="7" height="7" viewBox="0 0 7 7"><path d="M0.5 6.5 L6.5 0.5 M3.8 6.5 L6.5 3.8" stroke="#bdbdbd" stroke-width="1" fill="none"/></svg>
<svg class="b" style="left:1261.5px;top:97px" width="7" height="7" viewBox="0 0 7 7"><path d="M0.5 6.5 L6.5 0.5 M3.8 6.5 L6.5 3.8" stroke="#bdbdbd" stroke-width="1" fill="none"/></svg>
<svg class="b" style="left:1434.5px;top:97px" width="7" height="7" viewBox="0 0 7 7"><path d="M0.5 6.5 L6.5 0.5 M3.8 6.5 L6.5 3.8" stroke="#bdbdbd" stroke-width="1" fill="none"/></svg>
<svg class="b" style="left:1608.0px;top:97px" width="7" height="7" viewBox="0 0 7 7"><path d="M0.5 6.5 L6.5 0.5 M3.8 6.5 L6.5 3.8" stroke="#bdbdbd" stroke-width="1" fill="none"/></svg>
<div class="t" style="left:9.40px;top:17.70px;font-size:16px;line-height:16px;font-weight:400;color:#9a9a9a;letter-spacing:-0.144px;">Drivers</div>
<div class="t" style="left:81.00px;top:17.70px;font-size:16px;line-height:16px;font-weight:400;color:#9a9a9a;letter-spacing:-0.043px;">Equipment</div>
<div class="t" style="left:180.10px;top:17.70px;font-size:16px;line-height:16px;font-weight:400;color:#ffffff;letter-spacing:-0.318px;">Overview</div>
<div class="t" style="left:42.20px;top:80.10px;font-size:14px;line-height:14px;font-weight:700;color:#ffffff;letter-spacing:-0.398px;">Equipment Type</div>
<div class="t" style="left:193.20px;top:80.10px;font-size:14px;line-height:14px;font-weight:700;color:#ffffff;letter-spacing:-0.182px;">Name</div>
<div class="t" style="left:370.20px;top:80.10px;font-size:14px;line-height:14px;font-weight:700;color:#ffffff;letter-spacing:-0.069px;">Ord</div>
<div class="t" style="left:1026.40px;top:80.10px;font-size:14px;line-height:14px;font-weight:700;color:#ffffff;letter-spacing:-0.840px;">Status</div>
<div class="t" style="left:1285.30px;top:80.10px;font-size:14px;line-height:14px;font-weight:700;color:#ffffff;letter-spacing:-0.047px;">Detail</div>
<div class="t" style="left:1459.00px;top:80.10px;font-size:14px;line-height:14px;font-weight:700;color:#ffffff;letter-spacing:-1.098px;">Link</div>
<div class="t" style="left:192.70px;top:135.50px;font-size:16px;line-height:16px;font-weight:400;color:#f2f2f2;letter-spacing:-0.727px;">AHU1</div>
<div class="t" style="left:370.40px;top:135.50px;font-size:16px;line-height:16px;font-weight:400;color:#f2f2f2;letter-spacing:-0.019px;">slot:/Drivers/Equipment/AHUS/AHU1</div>
<div class="t" style="left:192.70px;top:706.50px;font-size:16px;line-height:16px;font-weight:400;color:#f2f2f2;letter-spacing:-0.727px;">AHU2</div>
<div class="t" style="left:370.40px;top:706.50px;font-size:16px;line-height:16px;font-weight:400;color:#f2f2f2;letter-spacing:-0.019px;">slot:/Drivers/Equipment/AHUS/AHU2</div>
<div class="t" style="left:192.70px;top:780.50px;font-size:16px;line-height:16px;font-weight:400;color:#f2f2f2;letter-spacing:-0.727px;">AHU3</div>
<div class="t" style="left:370.40px;top:780.50px;font-size:16px;line-height:16px;font-weight:400;color:#f2f2f2;letter-spacing:-0.019px;">slot:/Drivers/Equipment/AHUS/AHU3</div>
<div class="t" style="left:1030.70px;top:135.90px;font-size:16px;line-height:16px;font-weight:400;color:#ffffff;letter-spacing:-0.163px;">Alarm</div>
<div class="t" style="left:1029.70px;top:781.60px;font-size:16px;line-height:16px;font-weight:400;color:#ffffff;letter-spacing:-0.481px;">Fault</div>
<div class="t" style="left:1032.30px;top:706.50px;font-size:16px;line-height:16px;font-weight:400;color:#f2f2f2;letter-spacing:0.000px;">-</div>
<div class="t" style="left:41.40px;top:199.90px;font-size:14px;line-height:14px;font-weight:400;color:#bdbdbd;letter-spacing:-0.162px;">Points</div>
<div class="t" style="left:848.70px;top:199.90px;font-size:14px;line-height:14px;font-weight:400;color:#bdbdbd;letter-spacing:0.095px;">Equipment</div>
<div class="t" style="left:66.20px;top:239.80px;font-size:14px;line-height:14px;font-weight:400;color:#ffffff;letter-spacing:-0.207px;">CHW Coil Temperature</div>
<div class="t" style="left:647.00px;top:239.80px;font-size:14px;line-height:14px;font-weight:400;color:#ffffff;letter-spacing:-0.460px;">75.00 °C</div>
<div class="t" style="left:66.20px;top:276.80px;font-size:14px;line-height:14px;font-weight:400;color:#f4f0fb;letter-spacing:-0.527px;">CHW Valve</div>
<div class="t" style="left:654.80px;top:276.80px;font-size:14px;line-height:14px;font-weight:400;color:#f4f0fb;letter-spacing:-0.539px;">7.77 °C</div>
<div class="t" style="left:65.20px;top:313.80px;font-size:14px;line-height:14px;font-weight:400;color:#ffffff;letter-spacing:-0.110px;">Discharge Air Temp</div>
<div class="t" style="left:647.00px;top:313.80px;font-size:14px;line-height:14px;font-weight:400;color:#ffffff;letter-spacing:-0.460px;">20.98 °C</div>
<div class="t" style="left:65.20px;top:350.80px;font-size:14px;line-height:14px;font-weight:400;color:#ffffff;letter-spacing:-0.264px;">Duct Static Pressure</div>
<div class="t" style="left:651.20px;top:350.80px;font-size:14px;line-height:14px;font-weight:400;color:#ffffff;letter-spacing:-0.261px;">0.70 psi</div>
<div class="t" style="left:65.20px;top:387.80px;font-size:14px;line-height:14px;font-weight:400;color:#ffffff;letter-spacing:-0.014px;">Duct Static Setpoint</div>
<div class="t" style="left:627.10px;top:387.80px;font-size:14px;line-height:14px;font-weight:400;color:#ffffff;letter-spacing:0.038px;">40.00 in/wc</div>
<div class="t" style="left:65.20px;top:424.80px;font-size:14px;line-height:14px;font-weight:400;color:#ffffff;letter-spacing:-0.182px;">Econ Enable Setpoint</div>
<div class="t" style="left:647.00px;top:424.80px;font-size:14px;line-height:14px;font-weight:400;color:#ffffff;letter-spacing:-0.460px;">20.00 °C</div>
<div class="t" style="left:65.20px;top:460.60px;font-size:14px;line-height:14px;font-weight:400;color:#ffffff;letter-spacing:-0.092px;">Econ Mode</div>
<div class="t" style="left:679.00px;top:460.60px;font-size:14px;line-height:14px;font-weight:400;color:#ffffff;letter-spacing:1.410px;">On</div>
<div class="t" style="left:65.20px;top:493.60px;font-size:14px;line-height:14px;font-weight:400;color:#ffffff;letter-spacing:-0.157px;">Filter Status</div>
<div class="t" style="left:663.50px;top:493.60px;font-size:14px;line-height:14px;font-weight:400;color:#ffffff;letter-spacing:-0.248px;">Clean</div>
<div class="t" style="left:65.20px;top:526.60px;font-size:14px;line-height:14px;font-weight:400;color:#ffffff;letter-spacing:-0.005px;">High Duct Static</div>
<div class="t" style="left:661.50px;top:526.60px;font-size:14px;line-height:14px;font-weight:400;color:#ffffff;letter-spacing:0.226px;">Alarm</div>
<div class="t" style="left:65.20px;top:560.80px;font-size:14px;line-height:14px;font-weight:400;color:#ffffff;letter-spacing:0.063px;">Low Limit Open</div>
<div class="t" style="left:661.50px;top:560.80px;font-size:14px;line-height:14px;font-weight:400;color:#ffffff;letter-spacing:0.226px;">Alarm</div>
<div class="t" style="left:65.20px;top:597.80px;font-size:14px;line-height:14px;font-weight:400;color:#ffffff;letter-spacing:-0.109px;">Mixed Air Sensor</div>
<div class="t" style="left:647.00px;top:597.80px;font-size:14px;line-height:14px;font-weight:400;color:#ffffff;letter-spacing:-0.460px;">23.59 °C</div>
<div class="t" style="left:948.00px;top:361.07px;font-size:12.5px;line-height:12.5px;font-weight:700;color:#ffffff;letter-spacing:-0.338px;text-shadow:0 0 2px #000,0 0 1px #000;">-5.97 °C</div>
<div class="t" style="left:933.00px;top:405.88px;font-size:12.5px;line-height:12.5px;font-weight:700;color:#ffffff;letter-spacing:-0.508px;text-shadow:0 0 2px #000,0 0 1px #000;">Auto</div>
<div class="t" style="left:944.70px;top:496.57px;font-size:12.5px;line-height:12.5px;font-weight:700;color:#ffffff;letter-spacing:-0.326px;text-shadow:0 0 2px #000,0 0 1px #000;">66.66 %</div>
<div class="t" style="left:1100.20px;top:395.57px;font-size:12.5px;line-height:12.5px;font-weight:700;color:#ffffff;letter-spacing:-0.436px;text-shadow:0 0 2px #000,0 0 1px #000;">23.59 °C</div>
<div class="t" style="left:1131.50px;top:364.97px;font-size:12.5px;line-height:12.5px;font-weight:700;color:#ffffff;letter-spacing:-0.447px;text-shadow:0 0 2px #000,0 0 1px #000;">Low Limit Open</div>
<div class="t" style="left:1165.20px;top:383.47px;font-size:12.5px;line-height:12.5px;font-weight:700;color:#ffffff;letter-spacing:-0.259px;text-shadow:0 0 2px #000,0 0 1px #000;">Normal</div>
<div class="t" style="left:1043.60px;top:498.57px;font-size:12.5px;line-height:12.5px;font-weight:700;color:#ffffff;letter-spacing:-0.465px;text-shadow:0 0 2px #000,0 0 1px #000;">Filter Status</div>
<div class="t" style="left:1062.90px;top:514.18px;font-size:12.5px;line-height:12.5px;font-weight:700;color:#ffffff;letter-spacing:-0.107px;text-shadow:0 0 2px #000,0 0 1px #000;">Dirty</div>
<div class="t" style="left:1147.80px;top:496.57px;font-size:12.5px;line-height:12.5px;font-weight:700;color:#6b617f;letter-spacing:-0.600px;">7.77 °C</div>
<div class="t" style="left:1227.00px;top:388.77px;font-size:12.5px;line-height:12.5px;font-weight:700;color:#ffffff;letter-spacing:-0.479px;">75.00 °C</div>
<div class="t" style="left:1309.90px;top:385.07px;font-size:12.5px;line-height:12.5px;font-weight:700;color:#ffffff;letter-spacing:-0.422px;text-shadow:0 0 2px #000,0 0 1px #000;">20.98 °C</div>
<div class="t" style="left:1415.80px;top:374.47px;font-size:12.5px;line-height:12.5px;font-weight:700;color:#ffffff;letter-spacing:-0.399px;text-shadow:0 0 2px #000,0 0 1px #000;">High Duct Static</div>
<div class="t" style="left:1440.20px;top:386.88px;font-size:12.5px;line-height:12.5px;font-weight:700;color:#ffffff;letter-spacing:-0.259px;text-shadow:0 0 2px #000,0 0 1px #000;">Normal</div>
<div class="t" style="left:1283.40px;top:482.77px;font-size:12.5px;line-height:12.5px;font-weight:700;color:#ffffff;letter-spacing:-0.023px;text-shadow:0 0 2px #000,0 0 1px #000;">On</div>
<div class="t" style="left:1272.80px;top:499.97px;font-size:12.5px;line-height:12.5px;font-weight:700;color:#ffffff;letter-spacing:-0.259px;text-shadow:0 0 2px #000,0 0 1px #000;">90.33 %</div>
<div class="t" style="left:1461.70px;top:483.57px;font-size:12.5px;line-height:12.5px;font-weight:700;color:#ffffff;letter-spacing:-0.356px;text-shadow:0 0 2px #000,0 0 1px #000;">0.70 psi</div>
</body></html>
